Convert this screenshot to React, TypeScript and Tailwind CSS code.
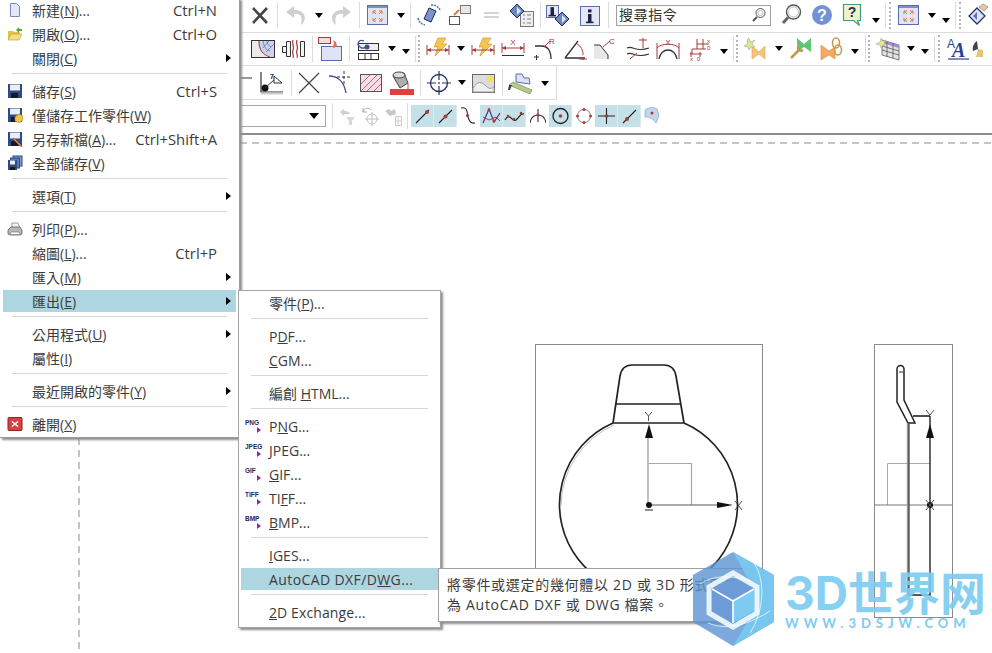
import type { ReactNode } from "react";

const FONT = "font-['Open_Sans','Noto_Sans_CJK_TC',sans-serif]";

function I({ w = 24, className = "", children }: { w?: number; className?: string; children: ReactNode }) {
  return (
    <svg width={w} height={24} viewBox={`0 0 ${w} 24`} fill="none" className={`shrink-0 ${className}`}>
      {children}
    </svg>
  );
}

const Sep = ({ className = "" }: { className?: string }) => <div className={`w-px h-[26px] shrink-0 bg-[#dcdcdc] ${className}`} />;

const Caret = ({ className = "" }: { className?: string }) => (
  <div className={`w-0 h-0 shrink-0 border-l-[4.5px] border-r-[4.5px] border-t-[5px] border-l-transparent border-r-transparent border-t-black ${className}`} />
);

const Grip = ({ className = "" }: { className?: string }) => (
  <div className={`w-[3px] h-[27px] shrink-0 border-l-2 border-dotted border-[#b4b4b4] ${className}`} />
);

const Fit = ({ className = "" }: { className?: string }) => (
  <I className={className}>
    <rect x="2.500" y="2.500" width="20" height="19" fill="#e3e4f2" stroke="#5a6cae" />
    <rect x="3" y="3" width="19" height="2" fill="#7f90c8" />
    <path d="M8 8h3M8 8v3M8 8l3 3M17 8h-3M17 8v3M17 8l-3 3M8 18h3M8 18v-3M8 18l3-3M17 18h-3M17 18v-3M17 18l-3-3" stroke="#d8794a" />
  </I>
);

const Bolt = ({ className = "" }: { className?: string }) => (
  <I className={className}>
    <path d="M12 1h8l-4 6h5L9 19l3-9H8z" fill="#f5c451" stroke="#d99a2c" strokeWidth=".7" />
    <path d="M1 8v10M23 8v10M1 13h22" stroke="#a83a3a" />
    <path d="M1 13l4-2v4zM23 13l-4-2v4z" fill="#a83a3a" />
  </I>
);

const Diamond = ({ x, y }: { x: number; y: number }) => (
  <g transform={`translate(${x} ${y})`}>
    <path d="M7 0l7 7-7 7-7-7z" fill="#6d86c4" stroke="#1f2a55" />
    <path d="M7 3l4 4-4 4z" fill="#dfe6f6" />
  </g>
);

const InfoBox = ({ x, y, s }: { x: number; y: number; s: number }) => (
  <g transform={`translate(${x} ${y})`}>
    <rect x=".5" y=".5" width={s} height={s} fill="#e6e7f5" stroke="#5a6cae" />
    <rect x={s / 2 - 1.5} y={s * 0.42} width="3.500" height={s * 0.42} fill="#1d2148" />
    <rect x={s / 2 - 1.5} y={s * 0.18} width="3.500" height="3" fill="#1d2148" />
    <rect x={s / 2 - 3.5} y={s * 0.82} width="7.500" height="1.600" fill="#1d2148" />
  </g>
);

const GRIDLINE = "#5a5a5a";

function Row1() {
  return (
    <div className="flex items-center h-[33px] pl-[248px] pb-[2px] border-b border-[#dcdcdc]">
      <I><path d="M5 5l14 15M19 5L5 20" stroke="#454545" strokeWidth="2.600" /></I>
      <Sep className="ml-[5px]" />
      <I className="ml-[6px]"><path d="M10 3L2 9l8 6v-4c6-1 9 2 7 11 6-4 6-15-7-15z" fill="#cfcfcf" /></I>
      <Caret className="ml-[7px]" />
      <I className="ml-[6px]"><path d="M14 3l8 6-8 6v-4c-6-1-9 2-7 11-6-4-6-15 7-15z" fill="#cfcfcf" /></I>
      <Sep className="ml-[6px]" />
      <Fit className="ml-[5px]" />
      <Caret className="ml-[8px]" />
      <Sep className="ml-[5px]" />
      <I className="ml-[6px]">
        <path d="M12 5l7 3-5 11-7-3z" fill="#7f93cc" stroke="#1f2a55" />
        <path d="M14 2c4 0 7 1 9 5M1 15c1 4 3 6 7 7" stroke="#4d78c8" strokeWidth="1.600" strokeDasharray="2 1" />
      </I>
      <I className="ml-[7px]">
        <rect x="12.500" y="2.500" width="10" height="8" fill="#e8e8e8" stroke="#777" />
        <rect x="1.500" y="13.500" width="10" height="8" fill="#fff" stroke="#555" />
        <path d="M6 12l5-5" stroke="#d8794a" strokeWidth="2" />
      </I>
      <I className="ml-[7px]"><path d="M5 10h15M5 14h15" stroke="#c8c8c8" strokeWidth="1.400" /></I>
      <I className="ml-[7px]">
        <rect x="10.500" y="8.500" width="13" height="15" fill="#ececf4" stroke="#777" />
        <path d="M13 12h2M17 12h4M13 16h2M17 16h4M13 20h2M17 20h4" stroke="#888" />
        <Diamond x={0} y={1} />
      </I>
      <Sep className="ml-[6px]" />
      <I className="ml-[5px]">
        <InfoBox x={0} y={2} s={12} />
        <Diamond x={9} y={9} />
      </I>
      <I className="ml-[8px]"><InfoBox x={2} y={3} s={19} /></I>
      <Sep className="ml-[6px]" />
      <div className="ml-[7px] w-[155px] h-[21px] shrink-0 border border-[#a0a0a0] flex items-center pl-[2px] pr-[4px] bg-white">
        <span className="text-[14px] text-[#333] leading-none tracking-[0.6px]">搜尋指令</span>
        <svg width="14" height="16" viewBox="0 0 14 16" className="ml-auto" fill="none">
          <circle cx="8.500" cy="6" r="4.500" stroke="#555" />
          <circle cx="8.500" cy="6" r="2.500" stroke="#bbb" />
          <path d="M5 10l-4 4" stroke="#555" strokeWidth="2" />
        </svg>
      </div>
      <I className="ml-[8px]">
        <circle cx="14.500" cy="9" r="7" fill="#fff" stroke="#555" strokeWidth="1.400" />
        <circle cx="14.500" cy="9" r="5" stroke="#bbb" />
        <path d="M9 14.500L4 20" stroke="#666" strokeWidth="3" />
      </I>
      <I className="ml-[7px]">
        <circle cx="12" cy="12" r="10" fill="#7293d3" />
        <text x="12" y="18" textAnchor="middle" fontSize="16" fontWeight="700" fill="#fff" fontFamily="Liberation Sans">?</text>
      </I>
      <I className="ml-[6px]">
        <path d="M3.500 1.500h17v16h-3l2 5-6-5h-10z" fill="#f1f3c4" stroke="#3f9a92" strokeWidth="1.200" />
        <text x="12" y="14" textAnchor="middle" fontSize="14" fontWeight="700" fill="#272a6b" fontFamily="Liberation Sans">?</text>
      </I>
      <Caret className="ml-[8px] mt-[10px]" />
      <Sep className="ml-[5px]" />
      <Grip className="ml-[3px]" />
      <Fit className="ml-[4px]" />
      <Caret className="ml-[8px]" />
      <Caret className="ml-[6px] mt-[10px]" />
      <Sep className="ml-[5px]" />
      <Grip className="ml-[3px]" />
      <I className="ml-[3px]">
        <path d="M12 5l8 8-8 8-8-8z" fill="#dde3f3" stroke="#27356e" strokeWidth="1.300" />
        <path d="M12 9v8l-4-4z" fill="#5a72b8" />
        <path d="M14 4l4-3 5 3-4 4z" fill="#e9c79a" stroke="#777" strokeWidth=".6" />
      </I>
    </div>
  );
}

function Row2() {
  return (
    <div className="flex items-center h-[33px] pl-[251px] pb-px border-b border-[#dcdcdc] overflow-hidden">
      <I>
        <rect x=".5" y="3.500" width="23" height="17" fill="#f1e8e8" stroke="#333" />
        <path d="M7 4c0 9 4 14 12 16h4V4z" fill="#cdd3ea" />
        <path d="M8 4c0 9 4 14 11 16" stroke="#b03b3b" />
        <path d="M12 4c1 6 3 9 7 10M16 4c0 3 2 5 4 6M12 11l6-7M15 15l8-8" stroke="#5a6cae" strokeWidth=".7" />
      </I>
      <I className="ml-[7px]">
        <path d="M.5 9.500h4v6h-4zM4.500 4.500h4v15h-4zM18.500 4.500h4v15h-4z" fill="#f4f4f4" stroke="#333" />
        <path d="M11 3c-2 4 2 6 0 10s2 5 0 8M15 3c-2 4 2 6 0 10s2 5 0 8" stroke="#b03b3b" strokeWidth="1.300" />
      </I>
      <Sep className="ml-[6px]" />
      <I className="ml-[5px]">
        <rect x=".5" y=".5" width="12" height="6" fill="#f3dcdc" stroke="#a83a3a" />
        <rect x="3.500" y="9.500" width="20" height="14" fill="#dfe3f5" stroke="#5a6cae" />
        <path d="M15 3l3 2 1 4-3 2-3-2 2 0 1-3z" fill="#d8794a" />
      </I>
      <Sep className="ml-[7px]" />
      <I className="ml-[6px]">
        <rect x="2.500" y="6.500" width="20" height="7" fill="#eee" stroke="#333" />
        <rect x="2.500" y="16.500" width="20" height="6" fill="#fff" stroke="#333" />
        <path d="M9 17v5M15 17v5" stroke="#333" />
        <path d="M8 4C3 2 0 7 4 10c2 2 5 1 7-1" stroke="#3d4ea0" strokeWidth="1.300" />
        <circle cx="11" cy="10" r="2.500" fill="#3d4ea0" />
      </I>
      <Caret className="ml-[8px]" />
      <Caret className="ml-[6px] mt-[5px]" />
      <Sep className="ml-[5px]" />
      <Grip className="ml-[2px]" />
      <Bolt className="ml-[5px]" />
      <Caret className="ml-[7px]" />
      <Bolt className="ml-[6px]" />
      <I className="ml-[6px]">
        <path d="M1 6v10M23 6v10M1 11h22" stroke="#a83a3a" />
        <path d="M1 11l4-2v4zM23 11l-4-2v4z" fill="#a83a3a" />
        <path d="M1 18.500h22" stroke="#333" />
        <text x="12" y="8" textAnchor="middle" fontSize="8" fill="#a83a3a" fontFamily="Liberation Sans">X</text>
      </I>
      <I className="ml-[7px]">
        <path d="M3 9h7c5 0 9 4 9 13" stroke="#333" strokeWidth="1.300" />
        <path d="M12 10l6-6" stroke="#a83a3a" />
        <text x="20" y="7" textAnchor="middle" fontSize="8" fill="#a83a3a" fontFamily="Liberation Sans">R</text>
        <path d="M2 20h5M4.500 18v5" stroke="#333" />
      </I>
      <I className="ml-[8px]">
        <path d="M1 21L14 4M1 21h20" stroke="#333" strokeWidth="1.300" />
        <path d="M13 7c4 2 6 6 6 11" stroke="#a83a3a" />
        <path d="M19 23v-3M15 22h8" stroke="#a83a3a" />
      </I>
      <I className="ml-[5px]">
        <path d="M1 8h6l8 10v4H1z" fill="#e8e8e8" />
        <path d="M1 8h6l8 10v4" stroke="#333" />
        <path d="M10 10l7-6" stroke="#a83a3a" />
        <text x="19" y="7" textAnchor="middle" fontSize="8" fill="#a83a3a" fontFamily="Liberation Sans">C</text>
      </I>
      <I className="ml-[9px]">
        <path d="M1 11c6-3 8 5 22 0M1 17c6-3 8 5 22 0" stroke="#333" strokeWidth="1.200" />
        <path d="M17 1v10M13 3h8M4 22l7-6" stroke="#a83a3a" />
      </I>
      <I className="ml-[6px]">
        <path d="M1 6v16M23 6v16M1 11c4-5 18-5 22 0" stroke="#a83a3a" />
        <path d="M3 22c2-12 16-12 18 0" stroke="#333" strokeWidth="1.300" />
        <text x="12" y="8" textAnchor="middle" fontSize="8" fill="#a83a3a" fontFamily="Liberation Sans">X</text>
      </I>
      <I className="ml-[8px]">
        <path d="M9 7h12M4 12h14M9 2v10M15 2v10M4 12v5" stroke="#a83a3a" />
        <path d="M2 17h12M3 15v5M12 15v5" stroke="#a83a3a" />
        <text x="2" y="24" fontSize="6" fill="#a83a3a" fontFamily="Liberation Sans">x</text>
        <text x="9" y="24" fontSize="6" fill="#a83a3a" fontFamily="Liberation Sans">0</text>
        <text x="19" y="6" fontSize="6" fill="#a83a3a" fontFamily="Liberation Sans">x</text>
        <text x="19" y="13" fontSize="6" fill="#a83a3a" fontFamily="Liberation Sans">0</text>
      </I>
      <Caret className="ml-[8px] mt-[5px]" />
      <Sep className="ml-[5px]" />
      <Grip className="ml-[2px]" />
      <I className="ml-[5px]">
        <path d="M8 9l7 6 6-6v13l-6-5-7 5z" fill="#f4c47c" stroke="#e2a050" strokeWidth=".6" />
        <path d="M5 1l1.500 4L11 3 8 7l3 3-4 0-2 3-1-3-4-1 4-2-1-4z" fill="#dfe88a" stroke="#999" strokeWidth=".5" />
      </I>
      <Caret className="ml-[7px]" />
      <I className="ml-[6px]">
        <path d="M8 1l7 6 7-6v14l-7-5-7 5z" fill="#5fc878" />
        <path d="M2 21l8-8M10 9c-2 2 0 6 4 4" stroke="#c49a4a" strokeWidth="2.600" />
      </I>
      <I className="ml-[7px]">
        <path d="M1 8l8 6 6-4v12l-6-4-8 5z" fill="#f4a860" stroke="#e08a40" strokeWidth=".6" />
        <ellipse cx="16" cy="6" rx="3.500" ry="5" stroke="#c49a4a" strokeWidth="1.600" />
        <ellipse cx="18" cy="13" rx="3.500" ry="5" stroke="#c49a4a" strokeWidth="1.600" />
      </I>
      <Caret className="ml-[7px] mt-[5px]" />
      <Sep className="ml-[6px]" />
      <Grip className="ml-[2px]" />
      <I className="ml-[5px]">
        <path d="M6 3l17 5v15L6 18z" fill="#e2e2e6" stroke={GRIDLINE} strokeWidth=".8" />
        <path d="M6 3l17 5v3L6 6z" fill="#a78ad0" />
        <path d="M6 9l17 5M6 13l17 5M11 5v15M17 6v15" stroke={GRIDLINE} strokeWidth=".8" />
        <path d="M5 1l1.500 3L10 3 8 6l3 2-4 0-2 3-1-3-4-1 4-2z" fill="#dfe88a" stroke="#999" strokeWidth=".5" />
      </I>
      <Caret className="ml-[7px]" />
      <Caret className="ml-[6px] mt-[5px]" />
      <Sep className="ml-[5px]" />
      <Grip className="ml-[3px]" />
      <I className="ml-[5px]">
        <text x="1" y="11" fontSize="12" fill="#2c3f8f" fontFamily="Liberation Sans">A</text>
        <text x="6" y="20" fontSize="20" fontStyle="italic" fontWeight="700" fill="#2c3f8f" fontFamily="Liberation Serif">A</text>
        <path d="M2 22h21" stroke="#2c3f8f" strokeWidth="1.200" />
      </I>
      <I className="ml-[2px]">
        <path d="M5 4c-3 2-5 6-4 10l5-2z" fill="#444" />
        <path d="M6 12l5 1v7H4z" fill="#e3c479" />
      </I>
    </div>
  );
}

function Row3() {
  return (
    <div className="flex items-center w-[557px] h-[34px] pl-[228px] border-b border-r border-[#dcdcdc]">
      <I><path d="M3 22l5-13c1-2 2-2 4-2h12" stroke="#333" strokeWidth="1.200" /></I>
      <I className="ml-[7px]">
        <path d="M2 1v20h22" stroke="#333" strokeWidth="1.200" />
        <circle cx="6" cy="17" r="3.500" fill="#111" />
        <path d="M6 17L16 8" stroke="#333" />
        <path d="M15 5l8 7h-8z" fill="#fff" stroke="#333" />
        <text x="11" y="8" fontSize="7" fontWeight="700" fill="#222" fontFamily="Liberation Sans">7</text>
        <path d="M2 22.500h22" stroke="#ccc" strokeWidth="2" />
      </I>
      <Sep className="ml-[8px]" />
      <I className="ml-[5px]"><path d="M2 2l20 20M22 2L2 22" stroke="#444" strokeWidth="1.200" /></I>
      <I className="ml-[7px]">
        <path d="M1 5c8 0 15 5 17 17" stroke="#3d4ea0" strokeWidth="1.300" />
        <path d="M16 0v13M9 6h14" stroke="#333" strokeDasharray="3 2" />
      </I>
      <I className="ml-[7px]">
        <rect x="1.500" y="3.500" width="21" height="17" fill="#f4dfe6" stroke="#555" />
        <path d="M2 13l9-9M2 20l16-16M8 20L22 6M15 20l7-7" stroke="#c0506e" strokeWidth=".9" />
      </I>
      <I className="ml-[7px]">
        <rect y="18" width="24" height="6" fill="#e13e3e" />
        <path d="M3 5l11-3 4 10-8 5z" fill="#aeaeae" stroke="#444" />
        <ellipse cx="9" cy="4" rx="6" ry="3" fill="#dcdcdc" stroke="#444" />
        <path d="M18 12v6" stroke="#e13e3e" />
      </I>
      <Sep className="ml-[6px]" />
      <I className="ml-[6px]">
        <circle cx="12" cy="12" r="8.500" stroke="#26306a" strokeWidth="1.300" />
        <path d="M12 0v9M12 15v9M0 12h9M15 12h9" stroke="#26306a" strokeWidth="1.200" />
        <circle cx="12" cy="12" r="1" fill="#a83a3a" />
      </I>
      <Caret className="ml-[7px]" />
      <I className="ml-[6px]">
        <rect x=".5" y="3.500" width="22" height="18" fill="#dcdcdc" stroke="#666" />
        <path d="M1 17c5-8 9-6 13-2s6 2 8 1v5H1z" fill="#f0f0f0" stroke="#999" />
        <circle cx="18" cy="8" r="3" fill="#f5e050" />
      </I>
      <Sep className="ml-[6px]" />
      <I className="ml-[5px]">
        <path d="M8 3h6l2 4h5l1 6-14-2z" fill="#dde3f5" stroke="#5a6cae" />
        <path d="M1 14l4-3 19 8-2 4z" fill="#b4c98a" stroke="#7d9058" strokeWidth=".7" />
        <path d="M1 14l-1 5 2 0 2-5" fill="#444" />
      </I>
      <Caret className="ml-[9px] mt-[2px]" />
    </div>
  );
}

const Hi = ({ children }: { children: ReactNode }) => (
  <div className="h-[22px] w-[23px] shrink-0 bg-[#c6e0e8] shadow-[inset_-1px_0_0_#d8ebf0]">
    <svg width={23} height={22} viewBox="0 0 23 22" fill="none">{children}</svg>
  </div>
);

const Line = () => (
  <>
    <path d="M5 18L18 5" stroke="#222" strokeWidth="1.100" />
    <circle cx="16" cy="7" r="2" fill="#a83a3a" />
  </>
);

function Row4() {
  return (
    <div className="flex items-center h-[33px] pl-[200px] pb-px">
      <div className="w-[126px] h-[22px] shrink-0 border border-[#a8a8a8] flex items-center justify-end pr-[6px]">
        <Caret className="!border-l-[5px] !border-r-[5px] !border-t-[6px]" />
      </div>
      <Sep className="ml-[6px]" />
      <I w={20} className="ml-[4px]">
        <path d="M3 8l4-3v2c4 0 5 1 6 3H7v2z" fill="#cfcfcf" />
        <path d="M9 13h9l-3 4v4h-3v-4z" fill="#d8d8d8" />
      </I>
      <I w={20} className="ml-[3px]">
        <path d="M3 8c1-4 6-5 8-2M3 4v4h4" stroke="#aaa" />
        <circle cx="12" cy="15" r="5" stroke="#c0c0c0" />
        <path d="M12 8v14M5 15h14" stroke="#c0c0c0" />
      </I>
      <I w={20} className="ml-[3px]">
        <path d="M2 7l4-2 2 2 4-2 1 5-6 2z" fill="#c8c8c8" />
        <rect x="12.500" y="12.500" width="6" height="9" stroke="#ccc" />
        <path d="M13 17h5M15 13v8" stroke="#ccc" />
      </I>
      <Sep className="ml-[4px]" />
      <div className="ml-[3px] shrink-0"><Hi><Line /></Hi></div>
      <Hi>
        <path d="M5 18L18 5" stroke="#222" strokeWidth="1.100" />
        <circle cx="11.500" cy="11.500" r="2" fill="#a83a3a" />
      </Hi>
      <svg width="16" height="22" viewBox="0 0 16 22" fill="none" className="ml-[3px] shrink-0">
        <path d="M1 3c7-2 6 6 7 9s2 7 7 6" stroke="#222" strokeWidth="1.100" />
        <circle cx="7.500" cy="10.500" r="1.600" fill="#a83a3a" />
      </svg>
      <div className="ml-[4px] shrink-0">
        <Hi>
          <path d="M3 18L9 4l5 13 6-9" stroke="#3d2a8a" strokeWidth="1.100" />
          <path d="M3 12l6 3 7-3 4 4" stroke="#a83a3a" strokeWidth="1" />
          <circle cx="9" cy="5" r="1.500" fill="#a83a3a" />
          <circle cx="14" cy="16" r="1.500" fill="#a83a3a" />
        </Hi>
      </div>
      <Hi>
        <path d="M2 15c5-9 7 3 11 0s4-7 8-6" stroke="#222" strokeWidth="1.200" />
        <circle cx="5" cy="11" r="1.300" fill="#a83a3a" />
        <circle cx="11" cy="14" r="1.300" fill="#a83a3a" />
        <circle cx="18" cy="8" r="1.300" fill="#a83a3a" />
      </Hi>
      <svg width="16" height="22" viewBox="0 0 16 22" fill="none" className="ml-[4px] shrink-0">
        <path d="M0 18c1-6 4-8 8-8s7 2 8 8M8 4v13" stroke="#333" strokeWidth="1.100" />
        <circle cx="8" cy="10" r="1.600" fill="#a83a3a" />
      </svg>
      <div className="ml-[3px] shrink-0">
        <Hi>
          <circle cx="11.500" cy="11" r="7.500" stroke="#222" strokeWidth="1.300" />
          <circle cx="11.500" cy="11" r="1.800" fill="#a83a3a" />
        </Hi>
      </div>
      <svg width="16" height="22" viewBox="0 0 16 22" fill="none" className="ml-[4px] shrink-0">
        <circle cx="8" cy="11" r="6.500" stroke="#a8a0a0" strokeWidth="1.100" />
        <circle cx="8" cy="4.500" r="1.500" fill="#a83a3a" />
        <circle cx="8" cy="17.500" r="1.500" fill="#a83a3a" />
        <circle cx="1.500" cy="11" r="1.500" fill="#a83a3a" />
        <circle cx="14.500" cy="11" r="1.500" fill="#a83a3a" />
      </svg>
      <div className="ml-[3px] shrink-0">
        <Hi>
          <path d="M11.500 3v16M3 11h17" stroke="#222" strokeWidth="1.100" />
          <circle cx="11.500" cy="11" r="1.800" fill="#a83a3a" />
        </Hi>
      </div>
      <Hi>
        <path d="M5 18L18 5" stroke="#222" strokeWidth="1.100" />
        <circle cx="9" cy="14" r="2" fill="#a83a3a" />
      </Hi>
      <svg width="16" height="22" viewBox="0 0 16 22" fill="none" className="ml-[3px] shrink-0">
        <path d="M1 5c4-3 9-3 12-1l2 7-3 7C10 14 5 12 1 12z" fill="#c3d6ee" stroke="#8aa4c8" strokeWidth=".7" />
        <circle cx="8" cy="8" r="1.500" fill="#a83a3a" />
      </svg>
    </div>
  );
}

function Item({ icon, label, shortcut, arrow, active }: { icon?: ReactNode; label: ReactNode; shortcut?: string; arrow?: boolean; active?: boolean }) {
  return (
    <div className={`mx-[3px] my-px h-[22px] shrink-0 flex items-center pr-[5px] ${active ? "bg-[#aed6e1]" : ""}`}>
      <div className="w-[29px] shrink-0 flex justify-center pr-[5px]">{icon}</div>
      <span className="whitespace-nowrap">{label}</span>
      {shortcut && <span className="ml-auto mr-[14px] whitespace-nowrap text-[14.800px]">{shortcut}</span>}
      {arrow && <div className="ml-auto w-0 h-0 border-y-[4.5px] border-l-[5px] border-y-transparent border-l-black" />}
    </div>
  );
}

const MenuSep = () => (
  <div className="h-[9px] shrink-0 px-[12px] pt-[3px]"><div className="h-px bg-[#d6d6d6]" /></div>
);

const Ic = ({ children }: { children: ReactNode }) => (
  <svg width="16" height="16" viewBox="0 0 16 16" fill="none">{children}</svg>
);

const Floppy = () => (
  <>
    <rect x="1" y="1" width="14" height="14" fill="#2c4a86" />
    <rect x="3" y="1.500" width="10" height="6" fill="#e8eef8" />
    <rect x="4" y="10" width="7" height="5" fill="#1b1b1b" />
  </>
);

function FileMenu() {
  return (
    <div className={`absolute left-0 top-[-2px] w-[240px] h-[440px] flex flex-col bg-white border-r border-b border-[#9a9a9a] shadow-[2px_2px_2px_#8f8f8f] text-[14px] text-[#3c3c3c] ${FONT}`}>
      <Item label={<>新建(<u>N</u>)...</>} shortcut="Ctrl+N" icon={<Ic><path d="M3.500 1.500h6l3 3v10h-9z" fill="#e4e8f8" stroke="#7c88c0" /></Ic>} />
      <Item label={<>開啟(<u>O</u>)...</>} shortcut="Ctrl+O" icon={<Ic><path d="M1 5h5l1 1h6v2H5L2 14H1z" fill="#e2c24c" /><path d="M4 8h11l-3 6H1z" fill="#f4e07c" stroke="#b89a38" strokeWidth=".6" /><path d="M9 4l3-3v2h3v2h-3v2z" fill="#5aa83a" /></Ic>} />
      <Item label={<>關閉(<u>C</u>)</>} arrow />
      <MenuSep />
      <Item label={<>儲存(<u>S</u>)</>} shortcut="Ctrl+S" icon={<Ic><Floppy /></Ic>} />
      <Item label={<>僅儲存工作零件(<u>W</u>)</>} icon={<Ic><Floppy /><path d="M8 10l4-3 4 2v4l-4 3-4-2z" fill="#f2c44c" stroke="#a88428" strokeWidth=".6" /></Ic>} />
      <Item label={<>另存新檔(<u>A</u>)...</>} shortcut="Ctrl+Shift+A" icon={<Ic><Floppy /><path d="M7 7l7 7 1 2-2-1-7-7z" fill="#e0a040" stroke="#b03b3b" strokeWidth=".6" /></Ic>} />
      <Item label={<>全部儲存(<u>V</u>)</>} icon={<Ic><rect x="6" y="1" width="9" height="10" fill="#7f9ccc" stroke="#2c4a86" /><rect x="3.500" y="3" width="9" height="10" fill="#5a7cb8" stroke="#2c4a86" /><rect x="1" y="5" width="9" height="10" fill="#2c4a86" /><rect x="3" y="5.500" width="5" height="4" fill="#e8eef8" /><rect x="3" y="12" width="5" height="3" fill="#1b1b1b" /></Ic>} />
      <MenuSep />
      <Item label={<>選項(<u>T</u>)</>} arrow />
      <MenuSep />
      <Item label={<>列印(<u>P</u>)...</>} icon={<Ic><path d="M5 2h6l2 5H5z" fill="#f4f4f4" stroke="#777" strokeWidth=".7" /><path d="M1 9l3-3h9l2 3v4l-2 1H3l-2-1z" fill="#b8b8b8" stroke="#555" strokeWidth=".7" /><path d="M3 13l1-2h8l1 2" fill="#fff" stroke="#666" strokeWidth=".6" /></Ic>} />
      <Item label={<>縮圖(<u>L</u>)...</>} shortcut="Ctrl+P" />
      <Item label={<>匯入(<u>M</u>)</>} arrow />
      <Item label={<>匯出(<u>E</u>)</>} arrow active />
      <MenuSep />
      <Item label={<>公用程式(<u>U</u>)</>} arrow />
      <Item label={<>屬性(<u>I</u>)</>} />
      <MenuSep />
      <Item label={<>最近開啟的零件(<u>Y</u>)</>} arrow />
      <MenuSep />
      <Item label={<>離開(<u>X</u>)</>} icon={<Ic><rect x="1" y="1.500" width="14" height="13" rx="1" fill="#d8413f" stroke="#8f1f1f" /><path d="M5 5.500l6 5M11 5.500l-6 5" stroke="#fff" strokeWidth="1.500" /></Ic>} />
    </div>
  );
}

const Fmt = ({ tag }: { tag: string }) => (
  <div className="flex flex-col items-start w-[18px] font-['Liberation_Sans',sans-serif] leading-none">
    <span className="text-[6.500px] font-bold text-[#1d1d5c] leading-[7px] whitespace-nowrap">{tag}</span>
    <div className="ml-[12px] mt-[1px] w-0 h-0 border-y-[3.5px] border-l-[4px] border-y-transparent border-l-[#8a2a9a]" />
  </div>
);

function SubItem({ icon, label, active }: { icon?: ReactNode; label: ReactNode; active?: boolean }) {
  return (
    <div className={`mx-[2px] my-px h-[22px] shrink-0 flex items-center ${active ? "bg-[#aed6e1]" : ""}`}>
      <div className="w-[28px] shrink-0 pl-[4px]">{icon}</div>
      <span className="whitespace-nowrap">{label}</span>
    </div>
  );
}

function ExportMenu() {
  return (
    <div className={`absolute left-[238px] top-[290px] w-[203px] h-[338px] flex flex-col bg-white border border-[#a4a4a4] shadow-[2px_2px_2px_#8f8f8f] text-[14px] text-[#3c3c3c] ${FONT}`}>
      <SubItem label={<>零件(<u>P</u>)...</>} />
      <MenuSep />
      <SubItem label={<>P<u>D</u>F...</>} />
      <SubItem label={<><u>C</u>GM...</>} />
      <MenuSep />
      <SubItem label={<>編創 <u>H</u>TML...</>} />
      <MenuSep />
      <SubItem label={<>P<u>N</u>G...</>} icon={<Fmt tag="PNG" />} />
      <SubItem label={<><u>J</u>PEG...</>} icon={<Fmt tag="JPEG" />} />
      <SubItem label={<><u>G</u>IF...</>} icon={<Fmt tag="GIF" />} />
      <SubItem label={<>TI<u>F</u>F...</>} icon={<Fmt tag="TIFF" />} />
      <SubItem label={<><u>B</u>MP...</>} icon={<Fmt tag="BMP" />} />
      <MenuSep />
      <SubItem label={<><u>I</u>GES...</>} />
      <SubItem label={<span className="tracking-[0.4px]">AutoCAD DXF/D<u>W</u>G...</span>} active />
      <MenuSep />
      <SubItem label={<span className="tracking-[0.1px]"><u>2</u>D Exchange...</span>} />
    </div>
  );
}

function Tooltip() {
  return (
    <div className={`absolute left-[438px] top-[568px] w-[313px] h-[54px] pl-[8px] pt-[6px] bg-white border border-[#a0a0a0] shadow-[2px_2px_2px_#8f8f8f] text-[14px] leading-[20px] text-[#3c3c3c] tracking-[0.7px] whitespace-nowrap overflow-hidden ${FONT}`}>
      <div>將零件或選定的幾何體以 2D 或 3D 形式匯出</div>
      <div>為 AutoCAD DXF 或 DWG 檔案。</div>
    </div>
  );
}

function Canvas() {
  return (
    <svg width="992" height="518" viewBox="0 135 992 518" fill="none" className="block">
      <path d="M240 143H992" stroke="#8a8a8a" strokeDasharray="7 5" />
      <path d="M79 438V653" stroke="#8a8a8a" strokeDasharray="7 5" />

      {/* front view */}
      <rect x="535.500" y="344.500" width="227" height="273" stroke="#8a8a8a" />
      <path d="M648.500 463.500H691.500V505" stroke="#a8a8a8" strokeWidth="1.200" />
      <path d="M648 505V436" stroke="#b0b0b0" strokeWidth="1.600" />
      <path d="M648 505H720" stroke="#555" />
      <path d="M649 424l-4 14h8zM733 505l-16-3v6z" fill="#111" />
      <path d="M645 412l3.500 4 3.500-4M648.500 416v5M735 501l7 9M742 501l-7 9" stroke="#555" />
      <circle cx="649" cy="505" r="3" fill="#111" />
      <path d="M645 510h8" stroke="#222" />
      <path d="M613 423L620 376Q622 365 632 365H664Q674 365 676 376L684 423" stroke="#222" strokeWidth="1.700" />
      <path d="M615 404H681M613 423H684" stroke="#222" strokeWidth="1.500" />
      <path d="M613 423A89 89 0 1 0 684 423" stroke="#222" strokeWidth="1.700" />
      <path d="M613 424A89 89 0 0 0 560 505" stroke="#aaa" strokeWidth=".8" transform="translate(1 1)" />

      {/* side view */}
      <rect x="874.500" y="344.500" width="78" height="273" stroke="#8a8a8a" />
      <path d="M887.500 505V463.500H930" stroke="#aaa" />
      <path d="M874 505H952" stroke="#777" />
      <path d="M897 402V369A3.500 3.500 0 0 1 904 369V400L915 423H908L897 402Z" fill="#fff" stroke="#222" strokeWidth="1.500" />
      <path d="M899 372H903" stroke="#333" />
      <path d="M908 423V596" stroke="#999" strokeWidth="2.400" />
      <path d="M909 423V596" stroke="#222" strokeWidth="1" />
      <path d="M913 416H930" stroke="#111" strokeWidth="1.500" />
      <path d="M930 416V596" stroke="#222" strokeWidth="1.400" />
      <path d="M930 424l-4 14h8z" fill="#111" />
      <circle cx="930" cy="505" r="3" fill="#111" />
      <path d="M926 410l4 5 4-5M926 500l8 10M934 500l-8 10" stroke="#555" />
      <path d="M910 595H930" stroke="#111" strokeWidth="1.400" />
    </svg>
  );
}

function Watermark() {
  return (
    <div className="absolute left-[692px] top-[551px] flex items-start">
      <svg width="84" height="96" viewBox="0 0 84 96" fill="none" className="shrink-0">
        <path d="M41 1L82 24V71L41 95L1 71V24Z" fill="#5b93d2" fillOpacity=".8" />
        <path d="M41 1L82 24V71L41 95L62 60L62 38Z" fill="#78c8f0" fillOpacity=".95" />
        <path d="M41 22L65 36V62L41 76L17 62V36Z" fill="none" stroke="#f4f9fd" strokeWidth="5" strokeOpacity=".9" />
        <path d="M41 26L62 38L41 50L20 38Z" fill="#6c9bd8" />
        <path d="M20 38L41 50V72L20 60Z" fill="#6c9bd8" />
        <path d="M62 38L41 50V72L62 60Z" fill="#7ecbf2" />
        <path d="M41 50L20 38M41 50V72M41 50L62 38" stroke="#fff" strokeWidth="1.600" />
        <path d="M8 33C22 24 38 24 58 30M62 12C74 30 72 60 58 82M16 72C30 78 50 78 78 60" stroke="#fff" strokeOpacity=".7" />
      </svg>
      <div className="ml-[9px] mt-[17px] flex flex-col text-[#7ccbf0] font-['Lato','Noto_Sans_CJK_SC',sans-serif]">
        <div className="text-[46px] font-bold leading-[50px] whitespace-nowrap opacity-90 font-['Inter','Noto_Sans_CJK_SC',sans-serif]">3D世界网</div>
        <div className="text-[13px] leading-[10px] tracking-[5px] whitespace-nowrap font-bold">WWW.3DSJW.COM</div>
      </div>
    </div>
  );
}

export default function App() {
  return (
    <div className={`relative w-[992px] h-[653px] overflow-hidden bg-white ${FONT}`}>
      <Row1 />
      <Row2 />
      <Row3 />
      <Row4 />
      <div className="h-[2px] bg-[#8c8c8c]" />
      <Canvas />
      <FileMenu />
      <ExportMenu />
      <Tooltip />
      <Watermark />
    </div>
  );
}
